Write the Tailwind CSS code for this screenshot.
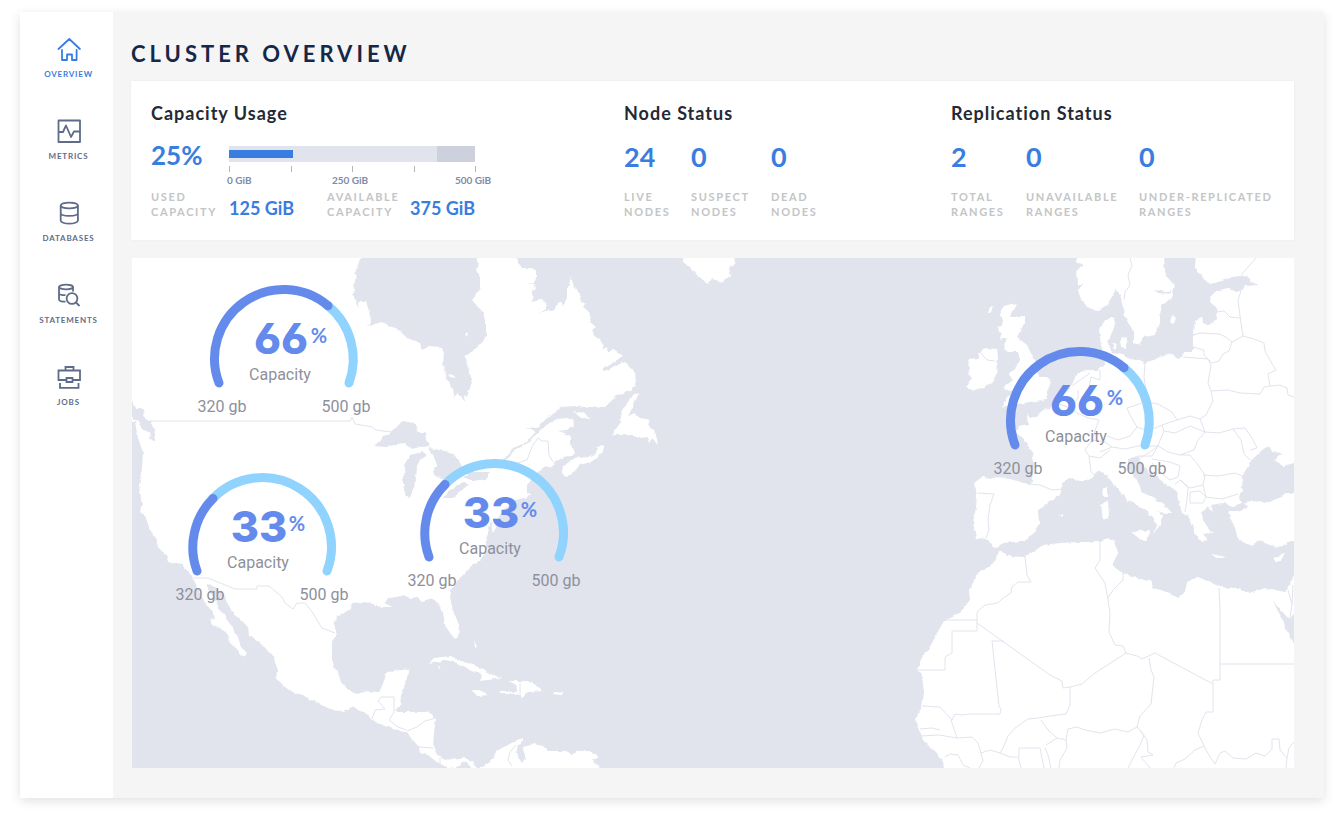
<!DOCTYPE html>
<html lang="en">

<head>
  <meta charset="UTF-8">
  <meta name="viewport" content="width=device-width, initial-scale=1.0">
  <title>Cluster Overview</title>
  <script src="https://cdn.jsdelivr.net/npm/@tailwindcss/browser@4"></script>
</head>

<body class="bg-white font-['Lato','Liberation_Sans',sans-serif]">
  <div class="mt-3 ml-5 mr-3 mb-5 flex bg-[#f5f5f5] shadow-[0_3px_10px_rgba(0,0,0,0.12)]">

    <!-- Sidebar -->
    <nav class="w-[93px] shrink-0 bg-white pl-1 pt-[25px]">
      <ul class="flex flex-col gap-10 text-[8px] leading-[10px] font-bold tracking-widest text-[#5f6c87]">
        <li>
          <a href="#" class="flex flex-col items-center gap-2 text-[#3a7de1]">
            <svg class="w-6 h-6" viewBox="0 0 24 24" fill="none" stroke="currentColor" stroke-width="1.800" stroke-linejoin="round" stroke-linecap="round">
              <path d="M1.500 12L12.300 2l10.600 10M5 13v10h5v-5.500h5V23h4.600V13" />
            </svg>
            OVERVIEW
          </a>
        </li>
        <li>
          <a href="#" class="flex flex-col items-center gap-2">
            <svg class="w-6 h-6" viewBox="0 0 24 24" fill="none" stroke="currentColor" stroke-width="1.800" stroke-linejoin="round">
              <path d="M1.500 1.500h21.500v21.500h-21.500zM1.500 13H6l3-6.500 5 11.500 3-5.500h6" />
            </svg>
            METRICS
          </a>
        </li>
        <li>
          <a href="#" class="flex flex-col items-center gap-2">
            <svg class="w-6 h-6" viewBox="0 0 24 24" fill="none" stroke="currentColor" stroke-width="1.800">
              <ellipse cx="12.300" cy="4.500" rx="8.600" ry="2.900" />
              <path d="M3.700 4.500v15c0 1.700 3.700 3.200 8.600 3.200s8.600-1.500 8.600-3.200v-15M3.700 12c0 1.700 3.700 2.900 8.600 2.900s8.600-1.200 8.600-2.900" />
            </svg>
            DATABASES
          </a>
        </li>
        <li>
          <a href="#" class="flex flex-col items-center gap-2">
            <svg class="w-6 h-6" viewBox="0 0 24 24" fill="none" stroke="currentColor" stroke-width="1.800">
              <ellipse cx="9" cy="4" rx="7" ry="2.300" />
              <path d="M2 4v12.500c0 1.300 2.500 2.200 6.500 2.200M16 4v4.500M2 10.200c0 1.200 2.500 1.900 6.500 2" />
              <circle cx="15" cy="15.500" r="5.400" />
              <path d="M19 19.500l3.500 3.500" />
            </svg>
            STATEMENTS
          </a>
        </li>
        <li>
          <a href="#" class="flex flex-col items-center gap-2">
            <svg class="w-6 h-6" viewBox="0 0 24 24" fill="none" stroke="currentColor" stroke-width="1.800">
              <path d="M9.500 15H1.500V5.500H23V15h-7.500M8.500 5.500v-3.500h8v3.500M9.500 13h6v4h-6zM3 18v4.800h18.500V18" />
            </svg>
            JOBS
          </a>
        </li>
      </ul>
    </nav>

    <main class="flex-1 pt-[30px] pb-[30px] pl-[18px] pr-[30px]">
      <h1 class="text-[22px] leading-6 font-bold tracking-[4px] text-[#152849]">CLUSTER OVERVIEW</h1>

      <!-- Summary -->
      <section class="mt-[15px] pl-5 pt-5 pb-5 grid grid-cols-[473fr_327fr_343fr] bg-white shadow-[0_0_2px_rgba(0,0,0,0.06)]">
        <div>
          <h2 class="text-lg leading-6 font-bold tracking-[1px] text-[#242a35]">Capacity Usage</h2>
          <div class="mt-4 grid grid-cols-[78px_98px_83px_auto] justify-start">
            <div class="text-[26px] leading-7 font-bold text-[#3a7de1]">25%</div>
            <div class="col-span-3 mt-[5px]">
              <div class="relative w-[246px] h-4 bg-[#e1e4ed]">
                <div class="absolute inset-y-0 right-0 w-[38px] bg-[#cdd0dd]"></div>
                <div class="absolute left-0 top-1 h-2 bg-[#3a7de1]" style="width: 26%"></div>
              </div>
              <div class="mt-1 w-[247px] flex justify-between">
                <span class="w-px h-[6px] bg-[#b4b6bc]"></span>
                <span class="w-px h-[6px] bg-[#b4b6bc]"></span>
                <span class="w-px h-[6px] bg-[#b4b6bc]"></span>
                <span class="w-px h-[6px] bg-[#b4b6bc]"></span>
                <span class="w-px h-[6px] bg-[#b4b6bc]"></span>
              </div>
              <div class="-ml-[2px] mt-[2px] grid grid-cols-[105px_123px_auto] justify-start text-[10px] leading-3 font-bold text-[#7e89a9]">
                <span>0 GiB</span>
                <span>250 GiB</span>
                <span>500 GiB</span>
              </div>
            </div>
            <div class="mt-[3px] text-[11px] leading-[15px] font-bold tracking-[0.15em] text-[#c3c5c6]">USED<br>CAPACITY</div>
            <div class="mt-[3px] pt-[7px] text-lg leading-6 font-bold text-[#3a7de1]">125 GiB</div>
            <div class="mt-[3px] text-[11px] leading-[15px] font-bold tracking-[0.15em] text-[#c3c5c6]">AVAILABLE<br>CAPACITY</div>
            <div class="mt-[3px] pt-[7px] text-lg leading-6 font-bold text-[#3a7de1]">375 GiB</div>
          </div>
        </div>

        <div>
          <h2 class="text-lg leading-6 font-bold tracking-[1px] text-[#242a35]">Node Status</h2>
          <dl class="mt-4 grid grid-cols-[67px_80px_auto] justify-start">
            <div class="flex flex-col-reverse">
              <dt class="mt-4 text-[11px] leading-[15px] font-bold tracking-[0.15em] text-[#c3c5c6]">LIVE<br>NODES</dt>
              <dd class="text-[27px] leading-8 font-bold text-[#3a7de1]">24</dd>
            </div>
            <div class="flex flex-col-reverse">
              <dt class="mt-4 text-[11px] leading-[15px] font-bold tracking-[0.15em] text-[#c3c5c6]">SUSPECT<br>NODES</dt>
              <dd class="text-[27px] leading-8 font-bold text-[#3a7de1]">0</dd>
            </div>
            <div class="flex flex-col-reverse">
              <dt class="mt-4 text-[11px] leading-[15px] font-bold tracking-[0.15em] text-[#c3c5c6]">DEAD<br>NODES</dt>
              <dd class="text-[27px] leading-8 font-bold text-[#3a7de1]">0</dd>
            </div>
          </dl>
        </div>

        <div>
          <h2 class="text-lg leading-6 font-bold tracking-[1px] text-[#242a35]">Replication Status</h2>
          <dl class="mt-4 grid grid-cols-[75px_113px_auto] justify-start">
            <div class="flex flex-col-reverse">
              <dt class="mt-4 text-[11px] leading-[15px] font-bold tracking-[0.15em] text-[#c3c5c6]">TOTAL<br>RANGES</dt>
              <dd class="text-[27px] leading-8 font-bold text-[#3a7de1]">2</dd>
            </div>
            <div class="flex flex-col-reverse">
              <dt class="mt-4 text-[11px] leading-[15px] font-bold tracking-[0.15em] text-[#c3c5c6]">UNAVAILABLE<br>RANGES</dt>
              <dd class="text-[27px] leading-8 font-bold text-[#3a7de1]">0</dd>
            </div>
            <div class="flex flex-col-reverse">
              <dt class="mt-4 text-[11px] leading-[15px] font-bold tracking-[0.15em] text-[#c3c5c6] whitespace-nowrap">UNDER-REPLICATED<br>RANGES</dt>
              <dd class="text-[27px] leading-8 font-bold text-[#3a7de1]">0</dd>
            </div>
          </dl>
        </div>
      </section>

      <!-- Node map -->
      <section class="mt-[18px] pl-px">
        <svg class="block w-full bg-[#e1e4ed]" viewBox="132 258 1162 510" role="img" aria-label="Node map">
          <defs>
            <filter id="coast" x="0" y="0" width="100%" height="100%">
              <feTurbulence type="fractalNoise" baseFrequency="0.16" numOctaves="2" seed="4" />
              <feDisplacementMap in="SourceGraphic" scale="4" xChannelSelector="R" yChannelSelector="G" />
            </filter>
          </defs>

          <g filter="url(#coast)" fill="#fff">
            <!-- The Americas -->
            <path d="M120 240H365L362 258 356 270 355 280 353 296 357 302 358 309 360 301 366 301 369 312 371 320 368 326 382 322 390 326 398 329 407 338 420 343 422 350 427 347 442 348 444 353 443 365 446 378 450 385 455 396 458 393 463 399 465 401 464 395 467 397 469 390 472 383 469 373 468 363 464 355 470 352 480 345 486 337 486 323 483 313 477 306 472 301 475 295 480 288 480 277 476 270 478 263 477 240H516L518 263 523 268 530 268 536 270 536 277 534 283 527 283 535 284 536 290 531 291 534 297 531 301 542 299 546 303 546 309 540 313 548 310 551 311 557 305 561 302 563 306 567 298 567 290 569 284 571 276 574 287 578 292 580 299 585 304 583 307 588 311 592 317 590 322 596 327 592 330 597 337 604 344 601 350 607 347 608 353 613 349 623 357 613 362 603 368 603 372 615 366 625 362 628 366 635 372 636 385 630 391 617 395 605 407 590 407 577 406 560 407 553 415 547 418 537 428 525 427 536 431 527 442 513 448 505 458 502 460 507 460 515 450 530 442 537 433 545 426 557 419 567 418 573 420 574 425 567 430 557 431 567 433 564 436 570 435 570 445 575 452 572 455 562 459 555 461 552 467 542 468 537 473 532 479 527 485 527 492 531 495 525 498 515 500 508 505 502 513 498 520 496 527 493 534 491 520 488 533 485 542 488 550 480 560 470 568 460 578 452 588 450 597 453 610 459 625 458 637 455 639 450 633 445 625 443 612 440 607 432 598 423 602 418 597 410 598 403 595 397 597 388 598 385 603 392 607 385 607 375 606 373 603 363 602 352 603 350 610 338 616 334 622 336 633 332 643 332 660 338 675 347 689 357 694 367 691 378 692 383 685 386 673 392 671 410 669 410 673 405 682 403 692 401 695 400 707 395 712 405 712 427 712 432 715 436 719 434 732 433 747 438 755 442 758 452 760 465 758 473 762 478 767 483 767 490 762 495 755 498 750 508 745 517 740 523 738 523 741 518 745 516 753 522 762 526 758 524 752 523 747 533 744 543 746 548 751 567 751 572 754 583 750 597 755 598 758 592 760 597 765 610 780H480L468 763 462 762 457 768 447 768 440 765 438 763 428 755 420 753 419 747 413 740 407 733 398 730 387 726 377 723 372 719 363 712 355 707 343 712 330 709 317 703 303 695 292 692 282 685 276 678 278 670 273 657 262 644 255 640 249 635 248 627 238 617 230 610 227 603 223 593 217 588 208 584 208 590 215 600 220 610 225 617 233 628 238 637 241 647 247 653 244 657 238 650 230 643 229 636 220 627 212 625 209 619 215 618 213 612 205 603 197 588 193 577 182 565 168 562 167 557 158 547 156 538 150 530 145 515 140 512 142 505 139 485 142 468 143 452 138 438 135 422 120 421Z" />
            <!-- Newfoundland, Nova Scotia, Anticosti, Greenland -->
            <path d="M632 395L639 393 634 404 628 417 635 414 640 418 650 420 648 425 655 431 658 445 653 439 649 443 647 437 640 438 630 435 612 435 620 423 622 412Z" />
            <path d="M562 473L563 465 577 458 590 457 595 455 598 447 603 445 603 452 590 462 580 465 570 476 565 477ZM573 411L583 413 592 419 581 418Z" />
            <path d="M680 240L684 262 689 266 697 275 708 284 711 278 716 279 722 284 726 277 731 277 729 268 734 265 736 240Z" />
            <!-- Caribbean -->
            <path d="M429 664L435 658 450 656 465 662 478 667 487 673 502 678 480 681 482 675 470 670 457 663 445 660ZM500 691L518 692 516 687 509 681 528 681 535 685 544 691 527 692 523 698 518 694 502 694ZM472 691L480 691 488 695 478 696ZM553 691L563 692 562 695 553 694ZM474 641L478 648 475 646ZM438 666L441 667 439 668Z" />
            <!-- Scandinavia -->
            <path d="M1076 240V262L1083 265 1077 270 1078 285 1084 283 1078 290 1080 298 1087 307 1097 311 1107 305 1113 295 1116 287 1121 298 1125 315 1133 332 1133 343 1140 345 1143 337 1155 335 1160 322 1161 305 1172 297 1175 285 1168 277 1165 272 1163 240ZM1120 337L1127 338 1126 348 1121 346ZM1112 343L1117 346 1114 350ZM1172 315L1176 318 1173 324 1170 322Z" />
            <!-- Continental Europe -->
            <path d="M1197 240L1195 268 1205 280 1210 284 1222 281 1233 277 1247 275 1251 282 1258 285 1246 286 1240 292 1228 289 1215 292 1210 297 1211 303 1216 307 1217 318 1210 326 1203 322 1202 317 1195 320 1193 332 1193 352 1183 352 1182 358 1177 359 1172 353 1160 357 1145 363 1133 359 1123 355 1112 353 1108 342 1112 332 1116 326 1113 316 1102 323 1099 330 1101 345 1104 355 1105 364 1097 370 1087 370 1078 373 1070 387 1063 398 1053 403 1050 409 1043 410 1038 416 1030 418 1027 414 1028 424 1018 426 1016 432 1023 438 1032 452 1034 462 1033 482 1028 484 1010 479 982 477 974 483 977 495 976 508 973 522 976 538 988 539 993 546 998 548 1003 543 1013 542 1025 542 1028 537 1035 533 1039 523 1038 512 1050 500 1060 495 1062 482 1070 478 1083 482 1092 477 1100 470 1107 476 1117 488 1127 500 1143 508 1153 517 1157 525 1153 533 1162 524 1162 516 1158 512 1168 513 1172 513 1163 503 1153 498 1142 492 1137 480 1128 468 1128 459 1138 456 1145 468 1163 482 1178 493 1180 505 1182 513 1188 516 1193 525 1195 533 1202 542 1207 540 1203 532 1213 534 1209 527 1203 521 1200 513 1207 507 1213 512 1211 505 1223 503 1230 507 1242 503 1240 498 1242 488 1243 475 1250 462 1262 450 1270 445 1272 452 1282 453 1273 460 1283 466 1294 463 1310 463V240Z" />
            <path d="M1310 493H1287L1270 502 1256 501 1245 503 1248 507 1237 511 1228 511 1230 518 1235 527 1238 540 1250 545 1260 541 1277 548 1292 541H1310Z" />
            <path d="M1131 532L1150 530 1147 542 1140 539ZM1101 504L1108 501 1109 517 1103 520ZM1103 489L1107 487 1107 497 1104 497ZM1211 554L1226 557 1218 559ZM1274 557L1285 554 1281 560 1275 561ZM1058 515L1063 513 1063 517Z" />
            <!-- Great Britain and Ireland -->
            <path d="M1017 303L1004 306 1000 316 1002 322 998 330 1002 333 999 340 1007 338 1003 348 1008 352 1018 352 1020 360 1017 366 1012 371 1008 373 1013 380 1003 388 1010 391 1017 392 1007 397 1001 408 1009 404 1017 404 1030 402 1047 399 1046 394 1051 382 1047 377 1039 377 1038 370 1033 358 1027 345 1017 337 1025 322 1025 316 1010 317 1012 311Z" />
            <path d="M987 348L997 349 998 358 995 380 985 387 972 392 966 386 972 378 968 374 971 368 968 360 980 359 978 352ZM990 307L993 306 991 312 988 313Z" />
            <!-- Africa -->
            <path d="M1000 550L1007 556 1025 557 1033 552 1043 545 1060 543 1077 542 1087 542 1100 542 1108 538 1115 541 1118 553 1112 565 1118 570 1123 573 1133 577 1150 580 1153 588 1170 593 1178 598 1185 592 1187 582 1198 577 1210 582 1220 587 1235 588 1250 593 1265 588 1285 592 1290 583 1294 575 1310 572V780H945L943 760 933 750 923 740 918 728 915 719 922 707 924 693 922 677 917 670 922 657 933 642 943 622 960 613 970 600 969 590 978 573 992 565Z" />
          </g>

          <!-- Inland water -->
          <g filter="url(#coast)" fill="#e1e4ed">
            <path d="M373 446L383 437 397 427 402 421 415 423 418 432 425 432 426 440 430 446 420 447 412 449 405 443 397 444 387 447ZM410 455L423 452 428 455 420 460 416 468 414 488 410 497 405 495 403 482 405 467 403 467ZM428 448L440 450 453 453 460 463 463 468 457 477 452 474 450 485 445 488 442 478 437 477 433 472 437 465 433 455ZM447 492L463 482 468 485 453 498 443 498ZM463 477L472 472 489 472 487 479 473 481Z" />
            <path d="M132 401L136 408 140 407 144 411 143 416 151 422 155 433 154 441 149 440 150 433 142 428 137 421 132 419ZM1273 600L1287 617 1290 618 1300 608V650L1291 640 1282 620Z" />
            <path d="M1154 290L1165 292 1173 290 1168 294 1158 293Z" />
          </g>
          <path d="M465 334l3-2-1 5zM448 374l5 1 3 3-6-1z" fill="#fff" />

          <!-- Country borders -->
          <g fill="none" stroke="#e1e4ed" stroke-width="1">
            <path d="M150 421H350L352 417 355 424 361 425 367 426 372 427 376 430 383 431 392 432M193 578L208 578 235 589H257V586H269L282 597 285 603 293 609 297 603H305L313 613 317 620 322 628 335 633M517 463L527 460 530 452 533 445 538 438 542 441 548 441 549 455 553 462M372 719L375 710 385 709 378 701 381 697H394V712M394 712L389 720 398 727 406 730M407 731L417 727 425 721 436 718M419 747L433 748M520 683V694M516 745L510 752 508 760 512 766M440 758V766" />
            <path d="M1130 258L1132 266 1128 275 1130 285 1125 292 1124 300M1256 258L1241 275M1241 291L1238 300 1240 316 1242 330 1243 336M1217 312L1224 311 1230 317 1240 318M1193 335L1200 333 1219 334 1226 337 1232 342 1243 336 1257 340 1264 343 1265 351 1270 360 1276 370 1268 374 1270 386 1280 385 1287 388 1288 395 1294 397M1193 347L1204 350 1204 355 1212 363 1219 361 1223 354 1229 351 1232 342M1183 357L1208 359 1211 365 1208 383 1211 391 1228 390 1240 393 1260 394 1264 387 1270 386M1145 363L1144 377 1146 390 1147 400M1211 391L1213 401 1206 415 1200 419 1205 432 1198 440 1194 450 1180 455 1168 452 1158 446M1127 408L1145 402 1158 404 1172 412 1177 420 1162 425 1148 431 1137 427 1130 415ZM1177 420L1190 416 1200 419M1162 425L1164 431 1175 433 1190 426 1205 432 1219 433 1233 429 1241 440 1244 454 1250 460M1233 429L1245 428 1252 438 1257 448 1250 450M1164 431L1159 443 1158 446 1150 452 1140 458M1107 436L1118 440 1130 436 1137 427M1100 452L1112 447 1125 449 1138 446 1158 446M1138 456L1152 456 1158 446M1152 459L1170 462 1180 466 1178 477 1170 480 1160 472 1152 463M1180 455L1190 455 1198 465 1205 475 1203 485 1190 488 1180 480M1203 475L1218 476 1235 473 1245 477M1203 485L1206 497 1222 499 1238 494M1190 492L1200 491 1206 497 1203 503 1190 503ZM1175 484L1181 480 1188 488 1187 500 1185 512M1100 370V380L1091 377 1088 393 1094 403M1052 403L1062 405 1070 408 1077 413 1088 418 1099 420 1096 428 1092 440 1085 450 1089 456 1091 472 1096 476M1072 386L1090 373M1070 408L1078 398 1078 390M1092 440L1105 442 1112 447M1089 456L1100 458 1110 450M1028 484L1040 485 1052 490 1062 489M978 493L994 494 990 505 988 520 989 530 986 538M980 352L987 360 995 361" />
            <path d="M1025 557L1027 575 1031 582H1018L1012 587 1011 593 1003 598 998 603 985 605 977 612V631H952V653L945 657V670H917M944 620H977M977 623L1050 675 1062 681 1063 688 1070 687 1082 684 1095 673 1126 653 1137 656 1142 659 1155 653 1213 684V680H1220V607L1219 588M1100 542L1100 560 1095 568 1105 583 1108 600 1110 613 1109 632 1115 645 1123 646 1126 653M1108 598L1113 590 1123 580V573M1004 641H992L999 706 1001 709 1000 714H971L962 715 955 714 952 720 940 707 922 706M1070 687V705L1066 714 1050 716 1038 718 1028 719 1015 728 1008 736 1003 748 1000 753 990 750 981 753 978 743 972 737 957 738 951 720M1149 658L1151 670 1154 677 1151 704 1140 716 1137 727 1128 732 1115 729 1100 733 1085 730 1077 727 1068 729 1066 740 1057 738 1048 730 1041 720M1213 684V712H1206L1202 720 1198 733 1204 746 1195 750 1185 759 1176 763 1174 768M1204 746L1210 757 1215 764 1220 753 1225 751 1233 758 1246 759 1256 753 1265 756 1272 749V739H1279L1280 750 1287 758 1286 768M1287 758L1289 748 1294 742M1220 664H1294M921 736L939 735 957 738M920 729L932 728 940 730M1000 753L1010 757 1018 757 1021 768M1019 748H1040L1044 768M1019 748V757M1045 748L1048 755 1051 768M1057 738L1046 745M1066 740L1067 748 1060 760 1059 768M1137 727L1144 735 1141 743 1128 768M1140 730L1147 740 1148 752 1153 755 1141 757 1150 768M945 757L950 754 958 755 963 765 970 768M981 753L983 761 979 768M1288 590L1292 604 1290 617M1292 604L1293 585" />
          </g>

          <!-- Capacity gauges, one per region; each group's origin is its arc's centre -->
          <g transform="translate(284 359)" text-anchor="middle">
            <path d="M44 -53.200A69 69 0 0 1 65 24" fill="none" stroke="#8fd3fe" stroke-width="9" stroke-linecap="round" />
            <path d="M-65 24A69 69 0 0 1 44 -53.200" fill="none" stroke="#648bec" stroke-width="9" stroke-linecap="round" />
            <text x="-3" y="-5" class="fill-[#648bec] text-[43px] font-extrabold font-['Inter',sans-serif] [font-feature-settings:'cv03']">66</text>
            <text x="35" y="-16" class="fill-[#648bec] text-[20px] font-bold">%</text>
            <text x="-4" y="21" class="fill-[#8e909c] text-base font-['Roboto',sans-serif]">Capacity</text>
            <text x="-62" y="53" class="fill-[#8e909c] text-base font-['Roboto',sans-serif]">320 gb</text>
            <text x="62" y="53" class="fill-[#8e909c] text-base font-['Roboto',sans-serif]">500 gb</text>
          </g>
          <g transform="translate(262 547)" text-anchor="middle">
            <path d="M-49 -48.500A69 69 0 0 1 65 24" fill="none" stroke="#8fd3fe" stroke-width="9" stroke-linecap="round" />
            <path d="M-65 24A69 69 0 0 1 -49 -48.500" fill="none" stroke="#648bec" stroke-width="9" stroke-linecap="round" />
            <text x="-3" y="-5" class="fill-[#648bec] text-[43px] font-extrabold font-['Inter',sans-serif]">33</text>
            <text x="35" y="-16" class="fill-[#648bec] text-[20px] font-bold">%</text>
            <text x="-4" y="21" class="fill-[#8e909c] text-base font-['Roboto',sans-serif]">Capacity</text>
            <text x="-62" y="53" class="fill-[#8e909c] text-base font-['Roboto',sans-serif]">320 gb</text>
            <text x="62" y="53" class="fill-[#8e909c] text-base font-['Roboto',sans-serif]">500 gb</text>
          </g>
          <g transform="translate(494 533)" text-anchor="middle">
            <path d="M-49 -48.500A69 69 0 0 1 65 24" fill="none" stroke="#8fd3fe" stroke-width="9" stroke-linecap="round" />
            <path d="M-65 24A69 69 0 0 1 -49 -48.500" fill="none" stroke="#648bec" stroke-width="9" stroke-linecap="round" />
            <text x="-3" y="-5" class="fill-[#648bec] text-[43px] font-extrabold font-['Inter',sans-serif]">33</text>
            <text x="35" y="-16" class="fill-[#648bec] text-[20px] font-bold">%</text>
            <text x="-4" y="21" class="fill-[#8e909c] text-base font-['Roboto',sans-serif]">Capacity</text>
            <text x="-62" y="53" class="fill-[#8e909c] text-base font-['Roboto',sans-serif]">320 gb</text>
            <text x="62" y="53" class="fill-[#8e909c] text-base font-['Roboto',sans-serif]">500 gb</text>
          </g>
          <g transform="translate(1080 421)" text-anchor="middle">
            <path d="M44 -53.200A69 69 0 0 1 65 24" fill="none" stroke="#8fd3fe" stroke-width="9" stroke-linecap="round" />
            <path d="M-65 24A69 69 0 0 1 44 -53.200" fill="none" stroke="#648bec" stroke-width="9" stroke-linecap="round" />
            <text x="-3" y="-5" class="fill-[#648bec] text-[43px] font-extrabold font-['Inter',sans-serif] [font-feature-settings:'cv03']">66</text>
            <text x="35" y="-16" class="fill-[#648bec] text-[20px] font-bold">%</text>
            <text x="-4" y="21" class="fill-[#8e909c] text-base font-['Roboto',sans-serif]">Capacity</text>
            <text x="-62" y="53" class="fill-[#8e909c] text-base font-['Roboto',sans-serif]">320 gb</text>
            <text x="62" y="53" class="fill-[#8e909c] text-base font-['Roboto',sans-serif]">500 gb</text>
          </g>
        </svg>
      </section>
    </main>
  </div>
</body>

</html>
